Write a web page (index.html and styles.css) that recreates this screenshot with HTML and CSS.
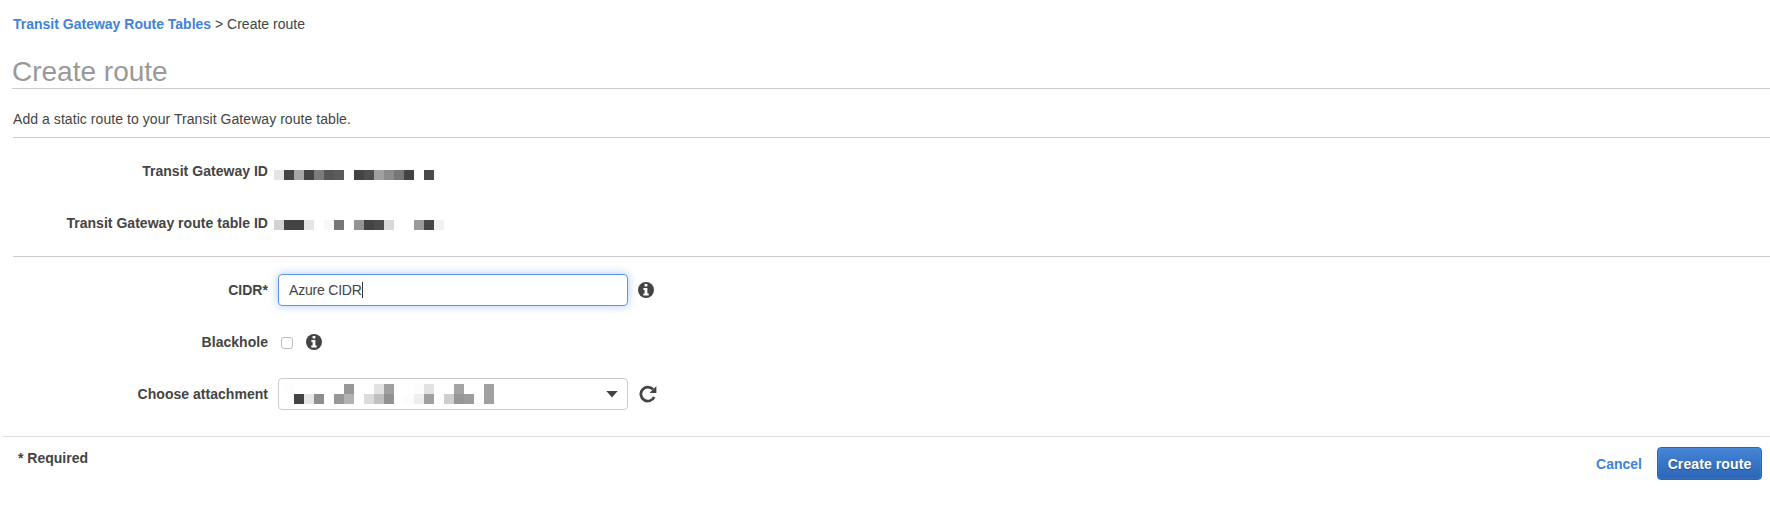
FILE: index.html
```html
<!DOCTYPE html>
<html lang="en">
<head>
<meta charset="utf-8">
<title>Create route</title>
<link rel="stylesheet" href="styles.css">
</head>
<body>
<svg class="defs" aria-hidden="true">
  <symbol id="info" viewBox="0 0 16 16">
    <circle cx="8" cy="8" r="8" fill="#444"/>
    <path fill="#fff" d="M6.6 2h2.8v2.4H6.6zM5.4 6h4v5.4h1.3v2H5.3v-2h1.3V8H5.4z"/>
  </symbol>
</svg>
<nav class="crumbs"><a class="link" href="#">Transit Gateway Route Tables</a> <span class="here">&gt; Create route</span></nav>
<h1 class="title"><span>Create route</span></h1>
<p class="intro"><span>Add a static route to your Transit Gateway route table.</span></p>
<section class="ids">
  <div class="row">
    <span class="label">Transit Gateway ID</span>
    <svg class="redacted first" width="170" height="10" shape-rendering="crispEdges">
      <path fill="#e4e4e4" d="M0 0h10v10H0z"/><path fill="#444" d="M10 0h10v10H10zM30 0h10v10H30zM80 0h10v10H80zM130 0h10v10H130z"/><path fill="#a6a6a6" d="M20 0h10v10H20z"/><path fill="#7c7c7c" d="M40 0h10v10H40z"/><path fill="#565656" d="M50 0h10v10H50z"/><path fill="#5c5c5c" d="M60 0h10v10H60z"/><path fill="#4e4e4e" d="M90 0h10v10H90z"/><path fill="#a0a0a0" d="M100 0h10v10H100z"/><path fill="#8c8c8c" d="M110 0h10v10H110z"/><path fill="#777" d="M120 0h10v10H120z"/><path fill="#4a4a4a" d="M150 0h10v10H150z"/>
    </svg>
  </div>
  <div class="row">
    <span class="label">Transit Gateway route table ID</span>
    <svg class="redacted second" width="170" height="10" shape-rendering="crispEdges">
      <path fill="#d3d3d3" d="M0 0h10v10H0z"/><path fill="#444" d="M10 0h20v10H10z"/><path fill="#e5e5e5" d="M30 0h10v10H30z"/><path fill="#f8f8f8" d="M50 0h10v10H50z"/><path fill="#777" d="M60 0h10v10H60z"/><path fill="#949494" d="M80 0h10v10H80z"/><path fill="#444" d="M90 0h10v10H90z"/><path fill="#4b4b4b" d="M100 0h10v10H100z"/><path fill="#d8d8d8" d="M110 0h10v10H110z"/><path fill="#9a9a9a" d="M140 0h10v10H140z"/><path fill="#474747" d="M150 0h10v10H150z"/><path fill="#f2f2f2" d="M160 0h10v10H160z"/>
    </svg>
  </div>
</section>
<form class="fields">
  <div class="row">
    <span class="label">CIDR*</span>
    <div class="box focused"><span class="value">Azure CIDR</span><i class="cursor"></i></div>
    <svg class="info"><use href="#info"/></svg>
  </div>
  <div class="row">
    <span class="label">Blackhole</span>
    <span class="check"></span>
    <svg class="info after-check"><use href="#info"/></svg>
  </div>
  <div class="row">
    <span class="label">Choose attachment</span>
    <div class="box select">
      <svg width="210" height="20" shape-rendering="crispEdges">
        <path fill="#fcfcfc" d="M0 0h10v10H0zM130 0h10v10H130zM120 10h10v10H120zM190 10h10v10H190z"/><path fill="#444" d="M10 10h10v10H10z"/><path fill="#e7e7e7" d="M20 10h10v10H20z"/><path fill="#8e8e8e" d="M30 10h10v10H30z"/><path fill="#989898" d="M60 0h10v10H60zM50 10h10v10H50z"/><path fill="#b2b2b2" d="M60 10h10v10H60z"/><path fill="#e2e2e2" d="M90 0h10v10H90zM140 0h10v10H140z"/><path fill="#a0a0a0" d="M100 0h10v10H100zM140 10h10v10H140zM200 0h10v20H200z"/><path fill="#dcdcdc" d="M80 10h10v10H80z"/><path fill="#c0c0c0" d="M90 10h10v10H90z"/><path fill="#929292" d="M100 10h10v10H100z"/><path fill="#eee" d="M130 10h10v10H130z"/><path fill="#a4a4a4" d="M170 0h10v10H170z"/><path fill="#cecece" d="M160 10h10v10H160z"/><path fill="#969696" d="M170 10h10v10H170z"/><path fill="#9c9c9c" d="M180 10h10v10H180z"/>
      </svg>
      <svg class="caret" width="12" height="7"><path fill="#444" d="M.3 0h11.4L6 6.4z"/></svg>
    </div>
    <svg class="refresh" viewBox="0 0 18 18"><path fill="none" stroke="#444" stroke-width="2.8" d="M14 4.3A7 7 0 1 0 15.2 12"/><path fill="#444" d="M17.4 1v6.9h-6.9z"/></svg>
  </div>
</form>
<footer class="footer">
  <span class="required">* Required</span>
  <a class="link cancel" href="#">Cancel</a>
  <button class="primary" type="button"><span>Create route</span></button>
</footer>
</body>
</html>
```
FILE: styles.css
```css
* { box-sizing: border-box; }
body {
  margin: 0;
  height: 512px;
  overflow: hidden;
  background: #fff;
  color: #444;
  font: 14px/20px "Liberation Sans", Arial, sans-serif;
}
svg { display: block; flex: none; }
.defs { display: none; }
.link { color: #4083da; font-weight: bold; text-decoration: none; }
.crumbs { height: 50px; padding: 14px 0 0 13px; white-space: pre; }
.title {
  margin: 0 0 0 12px;
  height: 39px;
  padding-top: 4px;
  border-bottom: 1px solid #ccc;
  color: #999;
  font-size: 28px;
  font-weight: normal;
  line-height: 36px;
}
.intro {
  margin: 0 0 0 13px;
  height: 49px;
  padding-top: 20px;
  border-bottom: 1px solid #ccc;
  letter-spacing: .06px;
}
.ids { margin-left: 13px; height: 119px; padding-top: 8px; border-bottom: 1px solid #ccc; }
.row { display: flex; align-items: center; height: 52px; }
.label { width: 255px; text-align: right; font-weight: bold; white-space: nowrap; letter-spacing: .03px; }
.ids .label { margin-bottom: 2px; }
.redacted { margin-left: 6px; }
.first { margin-top: 6px; }
.second { margin-top: 2px; }
.fields { margin-left: 13px; height: 179px; padding-top: 7px; }
.box {
  display: flex;
  align-items: center;
  width: 350px;
  height: 32px;
  margin-left: 10px;
  border: 1px solid #ccc;
  border-radius: 4px;
}
.focused { padding-left: 10px; border-color: #5897e4; box-shadow: 0 0 8px rgba(82, 148, 232, .5); }
.value { letter-spacing: -.2px; }
.cursor { width: 1px; height: 16px; background: #333; }
.select { padding: 0 9px 0 5px; justify-content: space-between; }
.info { width: 16px; height: 16px; margin-left: 10px; }
.check { width: 12px; height: 12px; margin: 2px 0 0 13px; border: 1px solid #bbb; border-radius: 3px; }
.after-check { margin-left: 13px; }
.refresh { width: 18px; height: 18px; margin-left: 11px; }
.footer {
  display: flex;
  align-items: flex-start;
  margin-left: 3px;
  padding: 10px 8px 0 15px;
  border-top: 1px solid #ddd;
}
.required { flex: 1; margin-top: 1px; font-weight: bold; }
.cancel { margin: 7px 15px 0 0; }
.primary {
  width: 105px;
  height: 33px;
  padding: 0;
  border: 1px solid #2e63b0;
  border-radius: 4px;
  background: linear-gradient(#4584d6, #2c65b5);
  box-shadow: inset 0 0 2px rgba(110, 170, 245, .6);
  color: #fff;
  font: bold 14px/20px "Liberation Sans", Arial, sans-serif;
  letter-spacing: .1px;
  text-shadow: 0 1px 1px rgba(0, 0, 0, .3);
}
```
